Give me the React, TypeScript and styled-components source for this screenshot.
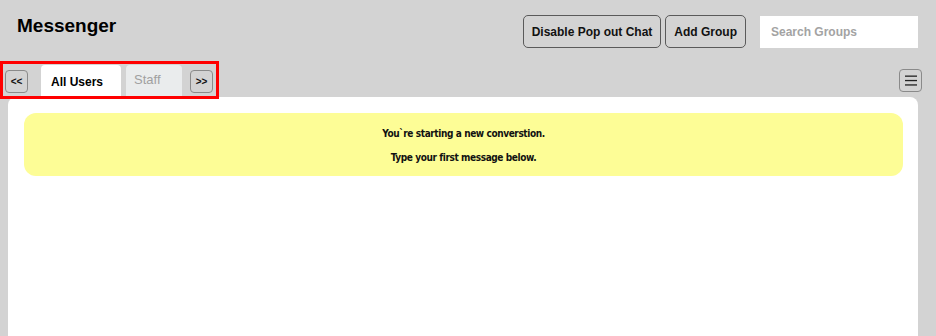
import React from 'react';
import styled, { createGlobalStyle } from 'styled-components';

const GlobalStyle = createGlobalStyle`
  html, body {
    margin: 0;
    padding: 0;
    background: #d3d3d3;
    font-family: "Liberation Sans", Arial, sans-serif;
  }
`;

const Page = styled.div`
  display: flex;
  flex-direction: column;
  height: 336px;
  overflow: hidden;
`;

const Header = styled.header`
  display: flex;
  align-items: flex-start;
  padding: 15px 18px 0 17px;
  height: 46px;
`;

const Title = styled.h1`
  margin: 0;
  margin-top: -1px;
  font-size: 19px;
  line-height: 24px;
  font-weight: bold;
  color: #000;
  flex: 1;
`;

const Actions = styled.div`
  display: flex;
  align-items: center;
  gap: 4px;
`;

const ActionButton = styled.button`
  height: 33px;
  padding: 0 8px;
  background: #d3d3d3;
  border: 1px solid #5a5a5a;
  border-radius: 5px;
  font-family: "Liberation Sans", Arial, sans-serif;
  font-size: 12px;
  font-weight: bold;
  color: #111;
`;

const SearchInput = styled.input`
  margin-left: 10px;
  width: 158px;
  height: 32px;
  box-sizing: border-box;
  border: none;
  outline: none;
  padding: 0 11px;
  background: #fff;
  font-family: "Liberation Sans", Arial, sans-serif;
  font-size: 12px;
  font-weight: bold;
  margin-top: 1px;

  &::placeholder {
    color: #a3a3a3;
  }
`;

const TabRow = styled.div`
  display: flex;
  align-items: flex-start;
  justify-content: space-between;
  height: 36px;
  padding-right: 14px;
`;

const TabStrip = styled.nav`
  display: flex;
  align-items: flex-end;
  height: 31px;
  width: 213px;
  border: 3px solid #ff0000;
  padding-top: 1px;
  position: relative;
  z-index: 1;
`;

const ArrowButton = styled.button<{ $gapLeft: number }>`
  align-self: center;
  margin-left: ${p => p.$gapLeft}px;
  margin-top: 1px;
  width: 23px;
  height: 23px;
  padding: 0;
  background: #d3d3d3;
  border: 1px solid #8a8a8a;
  border-radius: 4px;
  font-family: "Liberation Sans", Arial, sans-serif;
  font-size: 10px;
  font-weight: bold;
  color: #111;
`;

const Tab = styled.div<{ $active?: boolean; $width: number; $gapLeft: number }>`
  display: flex;
  align-items: center;
  box-sizing: border-box;
  width: ${p => p.$width}px;
  height: 31px;
  margin-left: ${p => p.$gapLeft}px;
  padding-left: ${p => (p.$active ? 10 : 8)}px;
  padding-top: ${p => (p.$active ? 2 : 0)}px;
  padding-bottom: ${p => (p.$active ? 0 : 2)}px;
  border-radius: 4px 4px 0 0;
  background: ${p => (p.$active ? '#fff' : '#eaeced')};
  color: ${p => (p.$active ? '#000' : '#a0a0a0')};
  font-size: ${p => (p.$active ? 12 : 13)}px;
  font-weight: ${p => (p.$active ? 'bold' : 'normal')};
`;

const MenuButton = styled.button`
  margin-top: 8px;
  width: 23px;
  height: 23px;
  padding: 0;
  display: flex;
  align-items: center;
  justify-content: center;
  background: #d3d3d3;
  border: 1px solid #8a8a8a;
  border-radius: 4px;
`;

const Panel = styled.main`
  flex: 1;
  margin: 0 18px 0 8px;
  background: #fff;
  border-radius: 8px 8px 0 0;
  padding: 16px 15px 0 16px;
`;

const Notice = styled.div`
  background: #fdfd96;
  border-radius: 12px;
  padding: 9px 0 6px;
  text-align: center;
`;

const NoticeLine = styled.p`
  margin: 0;
  font-family: "DejaVu Sans Condensed", "Liberation Sans", sans-serif;
  font-size: 10px;
  letter-spacing: -0.4px;
  line-height: 24px;
  font-weight: bold;
  color: #111;
`;

function MenuIcon() {
  return (
    <svg width="12" height="11" viewBox="0 0 12 11">
      <rect x="0" y="0.5" width="12" height="1.3" fill="#222" />
      <rect x="0" y="4.9" width="12" height="1.3" fill="#222" />
      <rect x="0" y="9.3" width="12" height="1.3" fill="#222" />
    </svg>
  );
}

export default function App() {
  return (
    <Page>
      <GlobalStyle />
      <Header>
        <Title>Messenger</Title>
        <Actions>
          <ActionButton>Disable Pop out Chat</ActionButton>
          <ActionButton>Add Group</ActionButton>
          <SearchInput placeholder="Search Groups" />
        </Actions>
      </Header>
      <TabRow>
        <TabStrip>
          <ArrowButton $gapLeft={2}>&lt;&lt;</ArrowButton>
          <Tab $active $width={80} $gapLeft={13}>All Users</Tab>
          <Tab $width={56} $gapLeft={5}>Staff</Tab>
          <ArrowButton $gapLeft={8}>&gt;&gt;</ArrowButton>
        </TabStrip>
        <MenuButton aria-label="menu">
          <MenuIcon />
        </MenuButton>
      </TabRow>
      <Panel>
        <Notice>
          <NoticeLine>You`re starting a new converstion.</NoticeLine>
          <NoticeLine>Type your first message below.</NoticeLine>
        </Notice>
      </Panel>
    </Page>
  );
}
